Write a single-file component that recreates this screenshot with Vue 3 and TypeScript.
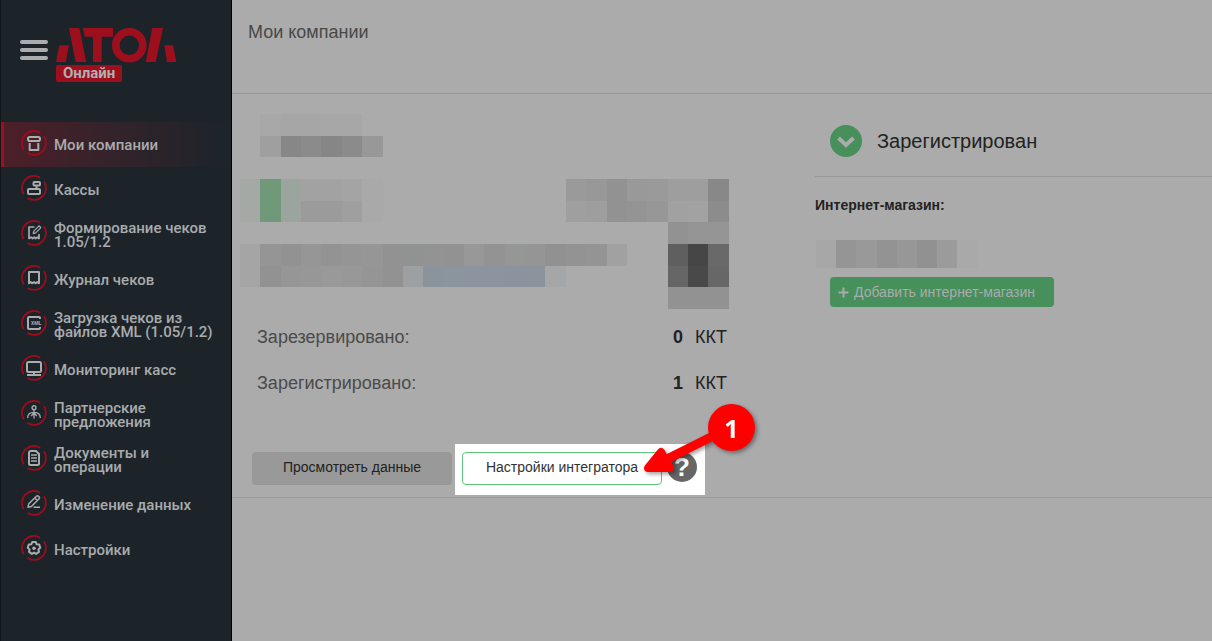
<script setup lang="ts">
interface MenuItem {
  label: string
  icon: string
  active?: boolean
}

interface Tile {
  x: number
  y: number
  w: number
  h: number
  fill: string
}

const menu: MenuItem[] = [
  { label: 'Мои компании', icon: 'store', active: true },
  { label: 'Кассы', icon: 'register' },
  { label: 'Формирование чеков\n1.05/1.2', icon: 'compose' },
  { label: 'Журнал чеков', icon: 'receipt' },
  { label: 'Загрузка чеков из\nфайлов XML (1.05/1.2)', icon: 'xml' },
  { label: 'Мониторинг касс', icon: 'monitor' },
  { label: 'Партнерские\nпредложения', icon: 'partner' },
  { label: 'Документы и\nоперации', icon: 'document' },
  { label: 'Изменение данных', icon: 'edit' },
  { label: 'Настройки', icon: 'gear' },
]

const counters = [
  { label: 'Зарезервировано:', value: 0 },
  { label: 'Зарегистрировано:', value: 1 },
]

// Column and row edges of the blurred-out company details
const cols = [0, 20, 41, 61, 81, 102, 122, 143, 163, 183, 204, 224, 244, 265, 285, 305, 326, 346, 367, 387, 407, 428, 448, 468, 489]
const rows = [0, 22, 43, 65, 87, 108, 130, 152, 173, 195]

// [row, first column, shades]
const runs: [number, number, string][] = [
  [0, 1, 'a8 a6 a6 a7 a7'],
  [1, 1, '9f 87 8b 86 8b 98'],
  [3, 0, 'a4a9a5 6f9979 9ba59d a2 a2 a4 a9'],
  [4, 0, 'a4a9a5 70997a 9ba49d 9b 9b 9f a9'],
  [3, 16, '9a 98 92 99 9a 9e 9e 88'],
  [4, 16, '9f 9e 92 94 97 a1 a2 8c'],
  [5, 21, '92 95 95'],
  [6, 0, 'a5 95 92 96 93 95 96 92 919392 93 92 98 93 949796 95 91 93 94 a1'],
  [7, 0, 'a5 92 96 97 99 98 95 92 9ca0a3 89949d 8b959e 8c959f 8c959f 8b949e 8b949d a4a6a8'],
  [6, 21, '5f 46 69'],
  [7, 21, '66 49 67'],
  [8, 21, '92 92 92'],
]

const hex = (s: string): string => '#' + (s.length === 2 ? s.repeat(3) : s)

const tiles: Tile[] = runs.flatMap(([r, c, shades]) =>
  shades.split(' ').map((s, i) => ({
    x: cols[c + i],
    y: rows[r],
    w: cols[c + i + 1] - cols[c + i],
    h: rows[r + 1] - rows[r],
    fill: hex(s),
  })),
)

const shopTiles: Tile[] = 'a7 95 99 93 97 91 9b a9'.split(' ').map((s, i) => ({
  x: [0, 20, 40, 61, 81, 101, 121, 141][i],
  y: 0,
  w: 21,
  h: 28,
  fill: hex(s),
}))
</script>

<template>
  <div class="app">
    <aside class="sidebar">
      <div class="brand">
        <button class="burger" type="button" aria-label="Меню"><i></i><i></i><i></i></button>
        <a class="logo" href="#" aria-label="АТОЛ Онлайн">
          <svg width="120" height="35" viewBox="0 0 120 35" fill="#9e0f1e">
            <path d="M3.3 17.3H13L9.7 34H0zM13 0h10.3l7 34H19.7z" />
            <path d="M27 0h30v8.7H45.7V34H37V8.7H28.8z" />
            <circle cx="73.3" cy="17.3" r="13.5" fill="none" stroke="#9e0f1e" stroke-width="7.6" />
            <path d="M96.3 0H107l-7.3 34H89.7zM108.3 17.3h8.7l3.3 16.7h-9.3z" />
          </svg>
          <span class="tag">Онлайн</span>
        </a>
      </div>
      <nav class="menu">
        <a v-for="item in menu" :key="item.icon" href="#" class="item" :class="{ active: item.active }">
          <svg class="icon" width="26" height="26" viewBox="0 0 26 26" fill="none">
            <path
              d="M2.7 19.2A12 12 0 0 1 19.2 2.7M22.9 6.3A12 12 0 0 1 6.5 23.1"
              stroke="#a00c1c"
              stroke-width="1.8"
            />
            <g stroke="#aaacae" stroke-width="2" stroke-linejoin="round">
              <template v-if="item.icon === 'store'">
                <rect x="7" y="7" width="12" height="4" rx="1.8" />
                <path d="M8.7 13v7h8.6v-7" />
              </template>
              <template v-else-if="item.icon === 'register'">
                <rect x="12.5" y="7" width="6.5" height="3.5" rx="1" />
                <path d="M15.5 10.5v3" />
                <rect x="7" y="14" width="12" height="5" rx="1" />
              </template>
              <template v-else-if="item.icon === 'compose'">
                <path d="M13.5 7H8v11.5l2-1.3 1.6 1.3 1.5-1.3 1.5 1.3 1.6-1.3 1.8 1.3V14" stroke-width="1.7" />
                <path d="M12.2 13.6l.6-2.5 5.2-5.3 1.9 1.8-5.2 5.3z" stroke-width="1.2" />
              </template>
              <template v-else-if="item.icon === 'receipt'">
                <path d="M8 7h10v11.3l-1.7-1.2-1.6 1.2-1.7-1.2-1.7 1.2-1.6-1.2L8 18.300z" />
              </template>
              <template v-else-if="item.icon === 'xml'">
                <path d="M19 9V8a1 1 0 0 0-1-1H8a1 1 0 0 0-1 1v10a1 1 0 0 0 1 1h10a1 1 0 0 0 1-1v-1" />
                <text x="10" y="15" fill="#aaacae" stroke="none" class="xml">XML</text>
              </template>
              <template v-else-if="item.icon === 'monitor'">
                <rect x="6" y="7" width="14" height="10" rx="1.5" />
                <path d="M13 17v3M6 20h14" />
              </template>
              <template v-else-if="item.icon === 'partner'">
                <circle cx="13" cy="7.7" r="1.9" stroke-width="1.4" />
                <path d="M6.7 18c0-3.5 2.3-5.6 6.3-5.6s6.3 2.1 6.3 5.6M13 10v8.5M13 13l-2.800 3M13 13l2.8 3" stroke-width="1.3" />
              </template>
              <template v-else-if="item.icon === 'document'">
                <path d="M10 6h5l3 3v9.500a1.500 1.500 0 0 1-1.500 1.500h-7A1.500 1.500 0 0 1 8 18.500V8a2 2 0 0 1 2-2z" />
                <path d="M10 10h6M10 13h6M10 16h6" stroke-width="1.5" />
              </template>
              <template v-else-if="item.icon === 'edit'">
                <path d="M7 17.3l.8-3.500 7.700-7.600a1.300 1.300 0 0 1 1.900 0l.7.7a1.300 1.300 0 0 1 0 1.900l-7.700 7.700zM13.800 8l2.500 2.500M12.500 17.300H19" stroke-width="1.5" />
              </template>
              <template v-else>
                <path d="M11.3 7h3.4l1 2.3 2.5.2 1.1 3.3-1.9 1.6.6 2.5-2.9 2-2.1-1.3-2.1 1.3-2.9-2 .6-2.5-1.9-1.6 1.1-3.3 2.5-.2z" />
                <circle cx="13" cy="13.2" r="1.8" fill="#aaacae" stroke="none" />
              </template>
            </g>
          </svg>
          <span>{{ item.label }}</span>
        </a>
      </nav>
    </aside>

    <main class="main">
      <header class="top">
        <h1>Мои компании</h1>
      </header>

      <section class="card">
        <div class="company">
          <svg class="mosaic" width="489" height="195" shape-rendering="crispEdges" aria-hidden="true">
            <rect v-for="(t, i) in tiles" :key="i" :x="t.x" :y="t.y" :width="t.w" :height="t.h" :fill="t.fill" />
          </svg>
          <dl class="counters">
            <div v-for="c in counters" :key="c.label">
              <dt>{{ c.label }}</dt>
              <dd><b>{{ c.value }}</b><span>ККТ</span></dd>
            </div>
          </dl>
          <div class="actions">
            <button class="btn view" type="button">Просмотреть данные</button>
            <div class="spot">
              <button class="btn integrator" type="button">Настройки интегратора</button>
              <button class="help" type="button" aria-label="Справка">?</button>
              <div class="pointer">
                <svg width="112" height="76" viewBox="0 0 112 76" aria-hidden="true">
                  <path
                    d="M5 65L18 49L27 65Z"
                    fill="#fe0000"
                    stroke="#fe0000"
                    stroke-width="8"
                    stroke-linejoin="round"
                  />
                  <path d="M22 57L76 30" stroke="#fe0000" stroke-width="9" />
                </svg>
                <span class="step">1</span>
              </div>
            </div>
          </div>
        </div>

        <div class="status">
          <div class="state">
            <svg width="32" height="32" viewBox="0 0 32 32" aria-hidden="true">
              <circle cx="16" cy="16" r="16" fill="#478f5b" />
              <path d="M8.500 13l7.500 7 7.500-7" fill="none" stroke="#ababab" stroke-width="4" />
            </svg>
            <h2>Зарегистрирован</h2>
          </div>
          <h3>Интернет-магазин:</h3>
          <svg class="shop" width="162" height="28" shape-rendering="crispEdges" aria-hidden="true">
            <rect v-for="(t, i) in shopTiles" :key="i" :x="t.x" :y="t.y" :width="t.w" :height="t.h" :fill="t.fill" />
          </svg>
          <button class="btn add" type="button">
            <svg width="11" height="11" viewBox="0 0 11 11" aria-hidden="true">
              <path d="M5.500 0.500v10M0.500 5.500h10" stroke="#ababab" stroke-width="2" />
            </svg>
            Добавить интернет-магазин
          </button>
        </div>
      </section>
    </main>
  </div>
</template>

<style>
body {
  margin: 0;
  background: #ababab;
}
</style>

<style scoped>
.app {
  display: flex;
  min-height: 100vh;
  background: #ababab;
  color: #222;
  font-family: "Liberation Sans", Arial, sans-serif;
}

button {
  font-family: inherit;
  cursor: pointer;
}

.sidebar {
  box-sizing: border-box;
  flex: 0 0 232px;
  border-left: 1px solid #111618;
  border-right: 1px solid #000;
  background: #1c242a;
  font-family: Roboto, sans-serif;
}

.brand {
  display: flex;
  align-items: flex-start;
  box-sizing: border-box;
  height: 122px;
  padding: 28px 0 0 19px;
}

.burger {
  display: flex;
  flex-direction: column;
  gap: 4px;
  width: 28px;
  margin: 12px 8px 0 0;
  padding: 0;
  border: 0;
  background: none;
}

.burger i {
  width: 28px;
  height: 4px;
  border-radius: 2px;
  background: #aaacae;
}

.logo {
  display: flex;
  flex-direction: column;
  align-items: flex-start;
  gap: 2px;
  text-decoration: none;
}

.tag {
  padding: 0 7px;
  border-radius: 2px;
  background: #9e0f1e;
  color: #b0b0b0;
  font-size: 15px;
  font-weight: 700;
  line-height: 17px;
}

.item {
  display: flex;
  align-items: center;
  box-sizing: border-box;
  height: 45px;
  padding-left: 20px;
  color: #a9abad;
  font-size: 15px;
  font-weight: 500;
  line-height: 14px;
  text-decoration: none;
  white-space: pre-line;
}

.item.active {
  padding-left: 17px;
  border-left: 3px solid #a50c1e;
  background: linear-gradient(90deg, #4c1f29, #33232a 50%, #1c242a);
}

.icon {
  flex: none;
  align-self: flex-start;
  margin: 8px 7px 0 0;
}

.xml {
  font: 700 5px Roboto, sans-serif;
}

.main {
  flex: 1;
  min-width: 0;
}

.top {
  height: 93px;
  border-bottom: 1px solid #999;
}

h1,
h2,
h3 {
  margin: 0;
  font-weight: 400;
}

h1 {
  padding: 20px 16px 0;
  color: #484848;
  font-size: 18px;
  line-height: 24px;
}

.card {
  display: grid;
  grid-template-columns: 583fr 397fr;
  border-bottom: 1px solid #999;
}

.company {
  padding: 20px 0 2px;
}

.mosaic {
  display: block;
  margin: 0 0 5px 8px;
}

.counters {
  max-width: 470px;
  margin: 0 0 38px 25px;
  font-size: 18px;
  line-height: 46px;
}

.counters div {
  display: flex;
  justify-content: space-between;
}

.counters dt {
  color: #4a4a4a;
}

.counters dd {
  display: flex;
  gap: 12px;
  margin: 0;
}

.actions {
  display: flex;
  align-items: flex-start;
  gap: 3px;
  padding-left: 20px;
}

.btn {
  box-sizing: border-box;
  height: 33px;
  padding: 0 0 3px;
  border: 0;
  border-radius: 4px;
  font-size: 14px;
  white-space: nowrap;
}

.view {
  width: 200px;
  margin-top: 8px;
  background: #999;
  color: #222;
}

.spot {
  position: relative;
  display: flex;
  align-items: flex-start;
  gap: 5px;
  box-sizing: border-box;
  width: 250px;
  height: 51px;
  padding: 8px 7px;
  background: #fff;
}

.integrator {
  width: 200px;
  border: 1px solid #5fc67e;
  background: #fff;
  color: #333;
}

.help {
  width: 30px;
  height: 30px;
  padding: 0;
  border: 0;
  border-radius: 50%;
  background: #666;
  color: #fff;
  font-size: 26px;
  font-weight: 700;
  line-height: 30px;
}

.pointer {
  position: absolute;
  left: 188px;
  top: -41px;
  width: 112px;
  height: 76px;
  filter: drop-shadow(2px 2px 2px rgba(0, 0, 0, 0.4));
  pointer-events: none;
}

.pointer svg {
  display: block;
}

.step {
  position: absolute;
  top: 1px;
  right: 0;
  width: 47px;
  height: 47px;
  border-radius: 50%;
  background: #fe0000;
  color: #fff;
  font: 700 25px/48px "Open Sans", sans-serif;
  text-align: center;
}

.state {
  display: flex;
  align-items: center;
  gap: 15px;
  height: 70px;
  padding: 12px 0 0 15px;
  border-bottom: 1px solid #999;
}

h2 {
  color: #222;
  font-size: 20px;
}

h3 {
  margin-top: 18px;
  color: #222;
  font-size: 14px;
  font-weight: 700;
  line-height: 20px;
}

.shop {
  display: block;
  margin: 25px 0 9px 1px;
}

.add {
  display: flex;
  align-items: center;
  gap: 5px;
  height: 30px;
  margin-left: 15px;
  padding: 0 19px 0 8px;
  background: #478f5b;
  color: #ababab;
}
</style>
